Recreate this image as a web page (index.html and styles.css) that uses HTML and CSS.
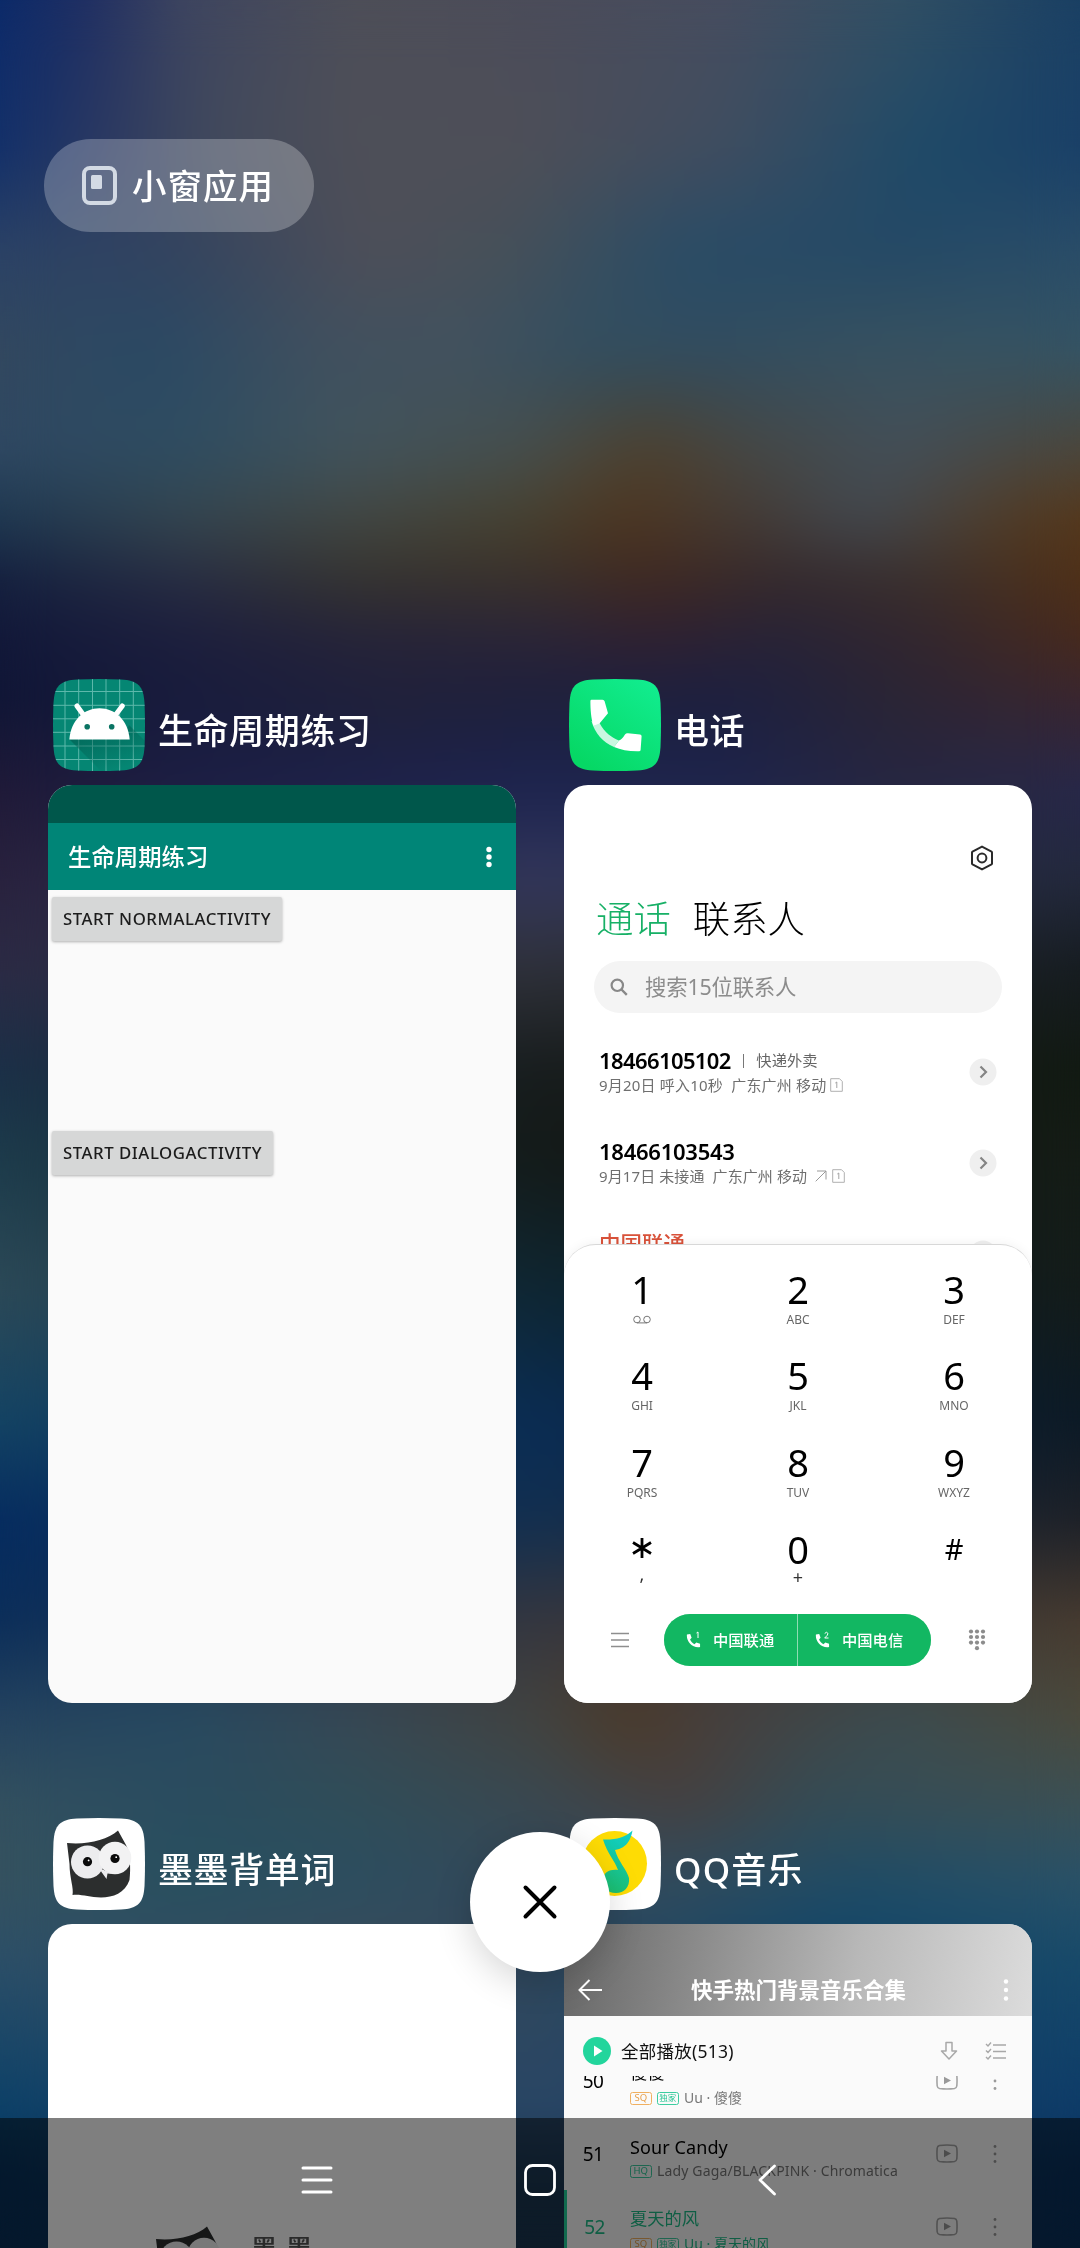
FILE: index.html
```html
<!DOCTYPE html>
<html lang="zh-CN">
<head>
<meta charset="utf-8">
<title>最近任务</title>
<link rel="stylesheet" href="styles.css">
</head>
<body>
<svg class="defs" width="0" height="0" aria-hidden="true">
  <defs>
    <clipPath id="squircle"><path d="M24 .500Q46 -.500 68 .500C85 1.500 90.500 7 91.500 24Q92.500 46 91.500 68C90.500 85 85 90.500 68 91.500Q46 92.500 24 91.500C7 90.500 1.500 85 .500 68Q-.500 46 .500 24C1.500 7 7 1.500 24 .500Z"/></clipPath>
    <linearGradient id="callGreen" x1="1" y1="0" x2="0.3" y2="1"><stop offset="0" stop-color="#12ee92"/><stop offset="1" stop-color="#06d865"/></linearGradient>
    <linearGradient id="shade" x1="0" y1="0" x2="0.6" y2="1"><stop offset="0" stop-color="#00584c" stop-opacity=".75"/><stop offset="1" stop-color="#00584c" stop-opacity="0"/></linearGradient>
    <linearGradient id="note" x1="0.6" y1="0" x2="0.4" y2="1"><stop offset="0" stop-color="#10cfc8"/><stop offset="1" stop-color="#1cc072"/></linearGradient>
    <symbol id="owl" viewBox="0 0 92 92">
      <path d="M14 25C34 27 54 22 65 12.500L73 27C77 34 78 50 76.500 62C72 75 60 79.500 48 79.500C36 79.500 29 76 19.500 77C21 70 16.500 60 16.500 46Z" fill="#2c2e2e"/>
      <circle cx="34.500" cy="44" r="16.500" fill="#ececee"/><circle cx="62" cy="40" r="16.300" fill="#f2f2f3"/>
      <path d="M46 50L48.500 54L53.500 61L54.500 55.500L60 56Z" fill="#ececee"/>
      <circle cx="34.500" cy="43.700" r="4.600" fill="#0b0b0b"/><circle cx="62" cy="40.500" r="4.600" fill="#0b0b0b"/>
      <circle cx="35.600" cy="42.400" r=".9" fill="#fff"/><circle cx="63.200" cy="39.200" r=".9" fill="#fff"/>
    </symbol>
    <symbol id="handset" viewBox="0 0 16 16">
      <path d="M1 1.500L4.500 1L6 5L4.300 7C5.500 9.500 6.800 10.800 9 12L11 10L15 11.500V15C7 16.500 0 9 1 1.500Z" fill="#fff"/>
    </symbol>
    <symbol id="mv" viewBox="0 0 22 19">
      <path d="M3.500 1.500Q11 .500 18.500 1.500Q20.500 2 20.800 4Q21.300 9.500 20.800 15Q20.500 17 18.500 17.500Q11 18.500 3.500 17.500Q1.500 17 1.200 15Q.700 9.500 1.200 4Q1.500 2 3.500 1.500Z" fill="none" stroke="#a4a4a4" stroke-width="1.600"/>
      <path d="M8 5.800L15 9.500L8 13.200Z" fill="#999"/>
    </symbol>
    <symbol id="more" viewBox="0 0 4 20">
      <circle cx="2" cy="2.500" r="1.400" fill="#999"/><circle cx="2" cy="10" r="1.400" fill="#999"/><circle cx="2" cy="17.500" r="1.400" fill="#999"/>
    </symbol>
    <symbol id="sim" viewBox="0 0 13 14">
      <path d="M.700 .700H9.500L12.300 3.500V13.300H.700Z" fill="none" stroke="#a8a8a8" stroke-width=".9"/>
      <path d="M5.300 5L6.800 4V10" fill="none" stroke="#999" stroke-width=".9"/>
    </symbol>
    <symbol id="go" viewBox="0 0 28 28">
      <circle cx="14" cy="14" r="13.500" fill="#efefef"/>
      <path d="M11.500 8.500L17 14L11.500 19.500" fill="none" stroke="#848484" stroke-width="2.200"/>
    </symbol>
  </defs>
</svg>

<div class="screen">
  <div class="wallpaper" aria-hidden="true">
    <i class="b b1"></i><i class="b b2"></i><i class="b b3"></i><i class="b b4"></i><i class="b b5"></i><i class="b b6"></i><i class="b b7"></i><i class="b b8"></i><i class="b b9"></i><i class="b b10"></i><i class="b b11"></i><i class="b b12"></i><i class="b b13"></i><i class="b b14"></i><i class="b b15"></i><i class="b b16"></i><i class="b b17"></i><i class="b b18"></i><i class="b b19"></i><i class="b b20"></i><i class="b b21"></i><i class="b b22"></i><i class="b b23"></i><i class="b b24"></i>
    <i class="soften"></i>
  </div>

  <header class="top">
    <button class="pill">
      <svg width="36" height="40" viewBox="0 0 36 40"><rect x="2" y="2" width="31" height="35" rx="6" fill="none" stroke="#d3dae4" stroke-width="4"/><rect x="9" y="9" width="11" height="14" rx="1.500" fill="#d3dae4"/></svg>
      <span>小窗应用</span>
    </button>
  </header>

  <main class="tasks">
    <section class="task">
      <h2 class="name">
        <svg class="app" viewBox="0 0 92 92"><g clip-path="url(#squircle)"><rect width="92" height="92" fill="#058673"/>
          <path d="M12 0V92M25.700 0V92M39.500 0V92M53 0V92M66.700 0V92M80.300 0V92M0 12.500H92M0 26.300H92M0 39.800H92M0 53.300H92M0 67H92M0 80.500H92" stroke="#5db8ab" stroke-width="1"/>
          <path d="M16.500 60.500L48 92H92V62L76 46L70 60Z" fill="url(#shade)"/>
          <path d="M16.300 60.500C18 41 31 29.300 46.500 29.300S75 41 76.700 60.500Z" fill="#fff"/>
          <path d="M24 27L32 38M69.300 27L61 38" stroke="#fff" stroke-width="5" stroke-linecap="round"/>
          <circle cx="34.200" cy="47.800" r="2.800" fill="#0a7463"/><circle cx="58.700" cy="47.800" r="2.800" fill="#0a7463"/></g></svg>
        <span>生命周期练习</span>
      </h2>
      <div class="card demo">
        <div class="status"></div>
        <div class="toolbar"><span>生命周期练习</span>
          <svg width="6" height="22" viewBox="0 0 6 22"><circle cx="3" cy="3.500" r="2.700" fill="#fff"/><circle cx="3" cy="11" r="2.700" fill="#fff"/><circle cx="3" cy="18.500" r="2.700" fill="#fff"/></svg>
        </div>
        <div class="demo-body">
          <button class="raised"><span>START NORMALACTIVITY</span></button>
          <button class="raised short"><span>START DIALOGACTIVITY</span></button>
        </div>
      </div>
    </section>

    <section class="task">
      <h2 class="name">
        <svg class="app" viewBox="0 0 92 92"><g clip-path="url(#squircle)"><rect width="92" height="92" fill="url(#callGreen)"/>
          <path d="M30.500 44C36 54 42 58 50 61.500L45 68C34 63 26 55 22.500 42Z" fill="#c9f7e0"/>
          <path d="M22.500 20.700H33.500Q35.200 20.700 35.600 22.300L39 34.300L30.500 44.500Q26.500 46 24.500 46.500C22 40 21.400 30 21.400 22Q21.400 20.700 22.500 20.700Z" fill="#fff"/>
          <path d="M50 61.500Q53 60.500 56 55.500Q57 54 59 54.200L71 55.500Q72.600 55.700 72.600 57.200L71.600 71Q71.500 72.300 70 72.300C60 72.500 52 71 45 68Z" fill="#fff"/></g></svg>
        <span>电话</span>
      </h2>
      <div class="card phone">
        <div class="settings">
          <svg width="24" height="26" viewBox="0 0 24 26"><path d="M12 1.600L21.500 6.500Q22 6.800 22 7.500V18.500Q22 19.200 21.500 19.500L12 24.400L2.500 19.500Q2 19.200 2 18.500V7.500Q2 6.800 2.500 6.500Z" fill="none" stroke="#2b2b2b" stroke-width="2"/><circle cx="12" cy="13" r="4.400" fill="none" stroke="#2b2b2b" stroke-width="2"/></svg>
        </div>
        <div class="tabs"><span class="on">通话</span><span>联系人</span></div>
        <div class="search">
          <svg width="18" height="18" viewBox="0 0 18 18"><circle cx="7.300" cy="7.300" r="5.700" fill="none" stroke="#888" stroke-width="2.200"/><path d="M11.500 11.500L16.800 16.800" stroke="#888" stroke-width="2.400"/></svg>
          <span>搜索15位联系人</span>
        </div>
        <div class="calls">
          <div class="call"><div class="who"><div class="num"><b>18466105102</b><i></i><em>快递外卖</em></div>
            <div class="meta"><span class="w1">9月20日 呼入10秒&nbsp; 广东广州 移动</span><svg width="13" height="14"><use href="#sim"/></svg></div></div>
            <svg width="28" height="28"><use href="#go"/></svg></div>
          <div class="call"><div class="who"><div class="num"><b class="wide">18466103543</b></div>
            <div class="meta"><span class="w2">9月17日 未接通&nbsp; 广东广州 移动</span><svg class="out" width="12" height="12" viewBox="0 0 12 12"><path d="M.700 11.300L11 1M2 1H11V9.500" fill="none" stroke="#999" stroke-width="1"/></svg><svg width="13" height="14"><use href="#sim"/></svg></div></div>
            <svg width="28" height="28"><use href="#go"/></svg></div>
          <div class="call last"><div class="who"><div class="num red">中国联通</div></div>
            <svg width="28" height="28"><use href="#go"/></svg></div>
        </div>
        <div class="pad">
          <div class="keys">
            <div class="key"><b>1</b><small><svg width="18" height="9" viewBox="0 0 18 9"><circle cx="4" cy="4.500" r="3.300" fill="none" stroke="#777"/><circle cx="14" cy="4.500" r="3.300" fill="none" stroke="#777"/><path d="M4 7.900H14" stroke="#777"/></svg></small></div>
            <div class="key"><b>2</b><small>ABC</small></div>
            <div class="key"><b>3</b><small>DEF</small></div>
            <div class="key"><b>4</b><small>GHI</small></div>
            <div class="key"><b>5</b><small>JKL</small></div>
            <div class="key"><b>6</b><small>MNO</small></div>
            <div class="key"><b>7</b><small>PQRS</small></div>
            <div class="key"><b>8</b><small>TUV</small></div>
            <div class="key"><b>9</b><small>WXYZ</small></div>
            <div class="key"><b><svg width="20" height="22" viewBox="0 0 20 22"><path d="M10 1V21M1 5.500L19 16.500M19 5.500L1 16.500" stroke="#000" stroke-width="2.800"/></svg></b><small class="sym comma">,</small></div>
            <div class="key"><b>0</b><small class="sym plus">+</small></div>
            <div class="key"><b class="hash">#</b></div>
          </div>
          <div class="dial">
            <svg width="20" height="18" viewBox="0 0 20 18"><path d="M1 2.500H19M1 9H19M1 15.500H19" stroke="#8e8e8e" stroke-width="1.600"/></svg>
            <div class="sims">
              <button><svg width="16" height="18" viewBox="0 0 16 18"><use href="#handset" y="2" width="15" height="15"/><path d="M10.500 2L12 1V7" fill="none" stroke="#fff"/></svg><span>中国联通</span></button>
              <button><svg width="16" height="18" viewBox="0 0 16 18"><use href="#handset" y="2" width="15" height="15"/><path d="M9.700 2.500Q11.500 0 13 2.500Q13 4 9.700 7H13.500" fill="none" stroke="#fff"/></svg><span>中国电信</span></button>
            </div>
            <svg width="18" height="22" viewBox="0 0 18 22" fill="#8c8c8c"><circle cx="3" cy="2.500" r="2.100"/><circle cx="9" cy="2.500" r="2.100"/><circle cx="15" cy="2.500" r="2.100"/><circle cx="3" cy="8" r="2.100"/><circle cx="9" cy="8" r="2.100"/><circle cx="15" cy="8" r="2.100"/><circle cx="3" cy="13.600" r="2.100"/><circle cx="9" cy="13.600" r="2.100"/><circle cx="15" cy="13.600" r="2.100"/><circle cx="9" cy="19.200" r="2.100"/></svg>
          </div>
        </div>
      </div>
    </section>

    <section class="task">
      <h2 class="name">
        <svg class="app" viewBox="0 0 92 92"><g clip-path="url(#squircle)"><rect width="92" height="92" fill="#fff"/><use href="#owl" width="92" height="92"/></g></svg>
        <span>墨墨背单词</span>
      </h2>
      <div class="card momo">
        <svg width="92" height="92"><use href="#owl" width="92" height="92"/></svg>
        <span>墨墨</span>
      </div>
    </section>

    <section class="task">
      <h2 class="name">
        <svg class="app" viewBox="0 0 92 92"><g clip-path="url(#squircle)"><rect width="92" height="92" fill="#fff"/><circle cx="45.500" cy="45.500" r="32.500" fill="#fedc04"/>
          <path d="M34 21.500C46 22 56 20 63.500 12.500C62 20 59 30 46 32C49 43 58 52 60 60C61 69 55 75 47 75C38 75 33 69 34 61C35 54 41 51 49 52C46 43 38 35 34 21.500Z" fill="url(#note)"/></g></svg>
        <span class="qq">QQ音乐</span>
      </h2>
      <div class="card music">
        <div class="mhead">
          <svg width="26" height="24" viewBox="0 0 26 24"><path d="M12.500 2L2.500 12L12.500 22M2.500 12H25" fill="none" stroke="#fff" stroke-width="2"/></svg>
          <span>快手热门背景音乐合集</span>
          <svg width="6" height="24" viewBox="0 0 6 24"><circle cx="3" cy="3.500" r="2.200" fill="#fff"/><circle cx="3" cy="12" r="2.200" fill="#fff"/><circle cx="3" cy="20.500" r="2.200" fill="#fff"/></svg>
        </div>
        <div class="playall">
          <svg width="28" height="28" viewBox="0 0 28 28"><circle cx="14" cy="14" r="14" fill="#22d59c"/><path d="M11 8.500L19.500 14L11 19.500Z" fill="#fff"/></svg>
          <span>全部播放(513)</span>
          <svg width="20" height="20" viewBox="0 0 20 20"><path d="M7 1.500H13V10H17.500L10 18L2.500 10H7Z" fill="none" stroke="#a8a8a8" stroke-width="1.500" stroke-linejoin="round"/></svg>
          <svg class="check" width="22" height="18" viewBox="0 0 22 18"><path d="M8 3H21M8 9.500H21M8 16H21M1 2L3 4L6 .500M1 8.500L3 10.500L6 7M1 15L3 17L6 13.500" fill="none" stroke="#a8a8a8" stroke-width="1.400"/></svg>
        </div>
        <div class="songs">
          <div class="song"><b>50</b><div><p>傻傻</p><small><i class="sq">SQ</i><i>独家</i><span>Uu · 傻傻</span></small></div><svg width="22" height="19"><use href="#mv"/></svg><svg width="4" height="20"><use href="#more"/></svg></div>
          <div class="song"><b>51</b><div><p class="latin">Sour Candy</p><small><i class="hq">HQ</i><span class="lady">Lady Gaga/BLACKPINK · Chromatica</span></small></div><svg width="22" height="19"><use href="#mv"/></svg><svg width="4" height="20"><use href="#more"/></svg></div>
          <div class="song playing"><b>52</b><div><p>夏天的风</p><small><i class="sq">SQ</i><i>独家</i><span>Uu · 夏天的风</span></small></div><svg width="22" height="19"><use href="#mv"/></svg><svg width="4" height="20"><use href="#more"/></svg></div>
        </div>
      </div>
    </section>
  </main>

  <button class="close"><svg width="36" height="36" viewBox="0 0 36 36"><path d="M3.500 3.500L32.500 32.500M32.500 3.500L3.500 32.500" stroke="#000" stroke-width="4" stroke-linecap="round"/></svg></button>

  <nav class="navbar">
    <svg width="32" height="32" viewBox="0 0 32 32"><path d="M2 4H30M2 16H30M2 28H30" stroke="#fff" stroke-width="3" stroke-linecap="round"/></svg>
    <svg width="34" height="34" viewBox="0 0 34 34"><rect x="2.500" y="2.500" width="29" height="29" rx="7" fill="none" stroke="#fff" stroke-width="2.800"/></svg>
    <svg width="20" height="34" viewBox="0 0 20 34"><path d="M17.500 3L3 17L17.500 31" fill="none" stroke="#fff" stroke-width="2.800" stroke-linecap="round" stroke-linejoin="round"/></svg>
  </nav>
</div>
</body>
</html>
```

FILE: styles.css
```css
* { box-sizing: border-box; }
body, h2, p { margin: 0; }
body { width: 1080px; height: 2248px; overflow: hidden; background: #16304a; font-family: "Noto Sans", "Noto Sans CJK SC", sans-serif; color: #000; }
button { border: 0; padding: 0; margin: 0; font: inherit; color: inherit; }
svg { display: block; flex: none; }
.defs { position: absolute; }
i, em { font-style: normal; }
span, b, em, p { white-space: nowrap; }

.screen { position: relative; width: 1080px; height: 2248px; overflow: hidden; }

/* Wallpaper: horizontal colour bands, each fading in over the one above */
.wallpaper { position: absolute; inset: 0; }
.soften { position: absolute; inset: 0; -webkit-backdrop-filter: blur(26px); backdrop-filter: blur(26px); }
.b { position: absolute; left: 0; right: 0; top: var(--y); bottom: 0; -webkit-mask-image: linear-gradient(to bottom, transparent 0, #000 var(--f)); mask-image: linear-gradient(to bottom, transparent 0, #000 var(--f)); }
.b1 { --y: 0px; -webkit-mask-image: none; mask-image: none; background: linear-gradient(90deg, #0b2a6a, #202f63 8%, #3e4560 17%, #4e4f58 33%, #4b4c5a 50%, #474d5f 67%, #335064 83%, #1a4064); }
.b2 { --y: 0px; --f: 150px; background: linear-gradient(90deg, #12306a, #2a3862 9%, #424a5c 20%, #4e4f58 33%, #4e4f58 48%, #3f4d60 67%, #1e4a68 85%, #1a4068); }
.b3 { --y: 150px; --f: 100px; background: linear-gradient(90deg, #2b4266, #34445f 17%, #4e4f59 34%, #465059 47%, #2a4c66 63%, #244966 83%, #2a4d68); }
.b4 { --y: 250px; --f: 100px; background: linear-gradient(90deg, #33485f, #2a4964 14%, #40505f 30%, #42525f 42%, #324e60 55%, #324d60 67%, #385260 83%, #355464); }
.b5 { --y: 350px; --f: 100px; background: linear-gradient(90deg, #2f4862, #2f4d61 17%, #42545c 33%, #464f4e 48%, #4e412e 60%, #464846 70%, #444f58 83%, #4c463b); }
.b6 { --y: 450px; --f: 70px; background: linear-gradient(90deg, #1e3750, #35454e 17%, #424642 33%, #47412f 48%, #4d3520 58%, #443b36 70%, #42484f 80%, #523a22 95%, #55381c); }
.b7 { --y: 520px; --f: 60px; background: linear-gradient(90deg, #15203f, #272c42 17%, #35332f 33%, #3a302b 50%, #3f2922 60%, #35292c 73%, #3a2f2c 85%, #4f3018); }
.b8 { --y: 580px; --f: 60px; background: linear-gradient(90deg, #121839, #1c1e3d 17%, #25233a 33%, #2a2438 50%, #2f2032 60%, #272338 72%, #33262e 86%, #472a1e); }
.b9 { --y: 640px; --f: 60px; background: linear-gradient(90deg, #101636, #181c3d 17%, #20213a 36%, #1e203c 50%, #1c2040 67%, #2a2535 83%, #3a2630); }
.b10 { --y: 700px; --f: 90px; background: linear-gradient(90deg, #201a38, #1c1e44 17%, #1d2450 50%, #1e244c 67%, #262642 83%, #27284a); }
.b11 { --y: 790px; --f: 90px; background: linear-gradient(90deg, #29223e, #34385c 50%, #23293c); }
.b12 { --y: 880px; --f: 90px; background: linear-gradient(90deg, #2c2b45, #2f3139 50%, #161c20); }
.b13 { --y: 970px; --f: 100px; background: linear-gradient(90deg, #1b3048, #171c1c 50%, #121a12); }
.b14 { --y: 1070px; --f: 90px; background: linear-gradient(90deg, #1d3c4c, #141a18 50%, #151c16); }
.b15 { --y: 1160px; --f: 130px; background: linear-gradient(90deg, #2d4a58, #0e2632 50%, #141c1a); }
.b16 { --y: 1290px; --f: 130px; background: linear-gradient(90deg, #144464, #0a2c54 50%, #0c1a26); }
.b17 { --y: 1420px; --f: 100px; background: linear-gradient(90deg, #062c60, #122f50 50%, #1e2128); }
.b18 { --y: 1520px; --f: 100px; background: linear-gradient(90deg, #0b2e5a, #36363e 50%, #473b30); }
.b19 { --y: 1620px; --f: 95px; background: linear-gradient(90deg, #24425f, #284a60 17%, #384854 33%, #43433f 50%, #4d3a28 58%, #46403e 67%, #3c4c50 83%, #4c4a3c); }
.b20 { --y: 1715px; --f: 85px; background: linear-gradient(90deg, #33505f, #2a4c5f 17%, #304d58 33%, #3a4850 50%, #464040 63%, #354c55 76%, #3c5054); }
.b21 { --y: 1800px; --f: 80px; background: linear-gradient(90deg, #36525f, #27505f 17%, #2c4e60 33%, #34485a 50%, #304c5e 63%, #1f4c66 80%, #2a5268); }
.b22 { --y: 1880px; --f: 80px; background: linear-gradient(90deg, #2c4f68, #3a4b5a 33%, #30485c 50%, #104468 75%, #184a6a); }
.b23 { --y: 1960px; --f: 155px; background: linear-gradient(90deg, #0b4068, #2a4666 50%, #0d3b68); }
.b24 { --y: 2115px; --f: 60px; background: linear-gradient(90deg, #08305a, #1b3650 50%, #09305c); }

.top { position: relative; display: flex; padding: 139px 0 0 44px; height: 679px; }
.pill { display: flex; align-items: center; gap: 14px; width: 270px; height: 93px; padding-left: 38px; border-radius: 47px; background: rgba(255,255,255,.25); color: #fff; font-size: 34.500px; letter-spacing: 1px; font-weight: 500; line-height: 50px; }

.tasks { position: relative; display: grid; grid-template-columns: 468px 468px; column-gap: 48px; row-gap: 115px; padding-left: 48px; grid-template-rows: 1024px 600px; }
.name { display: flex; align-items: center; gap: 13px; height: 106px; padding: 0 0 14px 5px; font-weight: 500; font-size: 35px; letter-spacing: .6px; line-height: 50px; color: #fff; }
.name span { padding-top: 12px; }
.name .qq { letter-spacing: 1.200px; }
.name + .card { height: 918px; }
.app { width: 92px; height: 92px; }
.card { border-radius: 24px; overflow: hidden; background: #fff; }

.demo { background: #fafafa; }
.status { height: 38px; background: #00574b; }
.toolbar { display: flex; justify-content: space-between; align-items: center; height: 67px; padding: 0 24px 0 20px; background: #008577; color: #fff; font-size: 23.400px; font-weight: 500; line-height: 30px; }
.demo-body { display: flex; flex-direction: column; align-items: flex-start; gap: 190px; padding: 7px 4px; }
.raised { width: 230px; height: 44px; border-radius: 2px; background: #d6d7d7; box-shadow: 0 1px 3px rgba(0,0,0,.3); color: #1c1c1c; font: 500 16.800px/24px "Noto Sans", sans-serif; letter-spacing: .55px; }
.raised.short { width: 221px; }

.phone { display: flex; flex-direction: column; }
.settings { display: flex; justify-content: flex-end; padding: 60px 38px 0 0; height: 105px; }
.tabs { display: flex; gap: 22px; padding-left: 32px; font-size: 37.400px; font-weight: 300; line-height: 54px; height: 71px; font-family: "Noto Sans CJK SC", sans-serif; }
.tabs .on { color: #17b066; }
.search { display: flex; align-items: center; gap: 17px; width: 408px; height: 52px; margin-left: 30px; padding-left: 16px; border-radius: 26px; background: #f4f4f4; color: #8c8c8c; font-size: 21.400px; line-height: 30px; letter-spacing: -.2px; }
.calls { height: 230.500px; padding-top: 35px; overflow: hidden; flex: none; }
.call { display: flex; justify-content: space-between; height: 91px; padding: 0 35px 0 35px; }
.call > svg { margin-top: 10px; }
.num { display: flex; align-items: center; height: 25px; font-size: 22px; line-height: 25px; }
.num b { font-weight: 600; letter-spacing: -.6px; }
.num b.wide { letter-spacing: -.25px; }
.num i { width: 1.500px; height: 14px; margin: 0 12px 0 12px; background: #777; }
.num em { font-size: 15.300px; color: #666; }
.num.red { color: #d9523a; font-size: 21.500px; font-weight: 500; padding-top: 1px; }
.meta { display: flex; align-items: center; gap: 3px; height: 24px; font-size: 15px; line-height: 22px; color: #6f6f6f; }
.meta .w1 { letter-spacing: .2px; }
.meta .w2 { letter-spacing: .1px; }
.meta .out { margin: 0 2px 0 5px; }
.pad { position: relative; flex: 1; border-radius: 32px 32px 0 0; background: #fff; border-top: 1px solid #d8d8d8; box-shadow: 0 0 12px rgba(0,0,0,.06); padding-top: 20px; }
.keys { display: grid; grid-template-columns: repeat(3, 1fr); grid-auto-rows: 86.800px; }
.key { display: flex; flex-direction: column; align-items: center; }
.key b { display: flex; align-items: center; justify-content: center; height: 49px; font-size: 38px; font-weight: 400; line-height: 49px; }
.key b.hash { font-size: 29px; height: 47px; }
.key b svg { margin-top: -2px; }
.key small { display: flex; align-items: center; height: 12px; font-size: 12px; line-height: 12px; color: #666; }
.key small.sym { font-size: 18px; height: 10px; color: #333; }
.key small.comma { height: 0; }
.key small.plus { height: 6px; }
.dial { display: flex; align-items: center; justify-content: space-between; height: 52px; margin-top: 2px; padding: 0 46px 0 46px; }
.sims { display: flex; gap: 1px; width: 267px; height: 52px; margin-left: -3px; border-radius: 26px; overflow: hidden; background: #8fdcb3; }
.sims button { width: 133px; flex: none; display: flex; align-items: center; gap: 11px; padding-left: 22px; background: #12b762; color: #fff; font-size: 15.300px; font-weight: 500; line-height: 22px; }
.sims button + button { padding-left: 17px; }

.momo { display: flex; padding: 290px 0 0 94px; gap: 16px; font-size: 28px; letter-spacing: 7px; line-height: 40px; font-weight: 500; color: #555; }
.momo span { padding-top: 15px; }

.music { background: #fafafa; }
.mhead { display: flex; align-items: center; justify-content: space-between; height: 92px; padding: 40px 23px 0 13px; background: linear-gradient(100deg, #666, #8d8d8d 30%, #b8b8b8 62%, #dcdcdc); color: #fff; font-size: 21.500px; font-weight: 700; line-height: 30px; }
.mhead span { margin-left: -9px; }
.playall { display: flex; align-items: center; height: 60px; padding: 10px 25px 0 19px; font-size: 17.500px; line-height: 24px; color: #111; }
.playall span { flex: 1; margin-left: 10px; letter-spacing: .25px; }
.playall .check { margin-left: 26px; }
.songs { height: 300px; overflow: hidden; }
.song { display: grid; grid-template-columns: 58px 314px 22px 1fr; height: 73px; align-items: center; padding-right: 35px; }
.song:first-child { margin-top: -32px; }
.song b { text-align: center; font-size: 19px; font-weight: 400; letter-spacing: -.5px; line-height: 26px; }
.song > div { padding: 10px 0 0 8px; }
.song > svg:last-child { justify-self: end; }
.song p { font-size: 17.300px; line-height: 24px; height: 25px; }
.song p.latin { font-size: 18px; line-height: 27px; letter-spacing: .1px; }
.song small { display: flex; align-items: center; gap: 5.500px; height: 24px; font-size: 14px; line-height: 20px; color: #777; }
.song small .lady { letter-spacing: .15px; }
.song small i { display: flex; align-items: center; justify-content: center; width: 21.500px; height: 13px; border: 1px solid #3ccda0; border-radius: 2.500px; color: #2cc796; font-size: 8.500px; line-height: 10px; }
.song small i.sq { border-color: #f0b060; color: #e8a04c; font-size: 9.500px; }
.song small i.hq { font-size: 9.500px; }
.playing { border-left: 3px solid #22d59c; grid-template-columns: 55px 314px 22px 1fr; }
.song.playing b, .song.playing p, .song.playing small span { color: #1fbd89; }

.close { position: absolute; left: 470px; top: 1832px; width: 140px; height: 140px; display: flex; align-items: center; justify-content: center; border-radius: 50%; background: #fff; box-shadow: 0 10px 36px rgba(0,0,0,.16); }
.navbar { position: absolute; left: 0; right: 0; bottom: 0; height: 130px; background: rgba(0,0,0,.5); display: flex; align-items: center; padding: 0 303px 6px 301px; justify-content: space-between; }
.navbar svg:nth-child(2) { margin-left: -10px; }
```
